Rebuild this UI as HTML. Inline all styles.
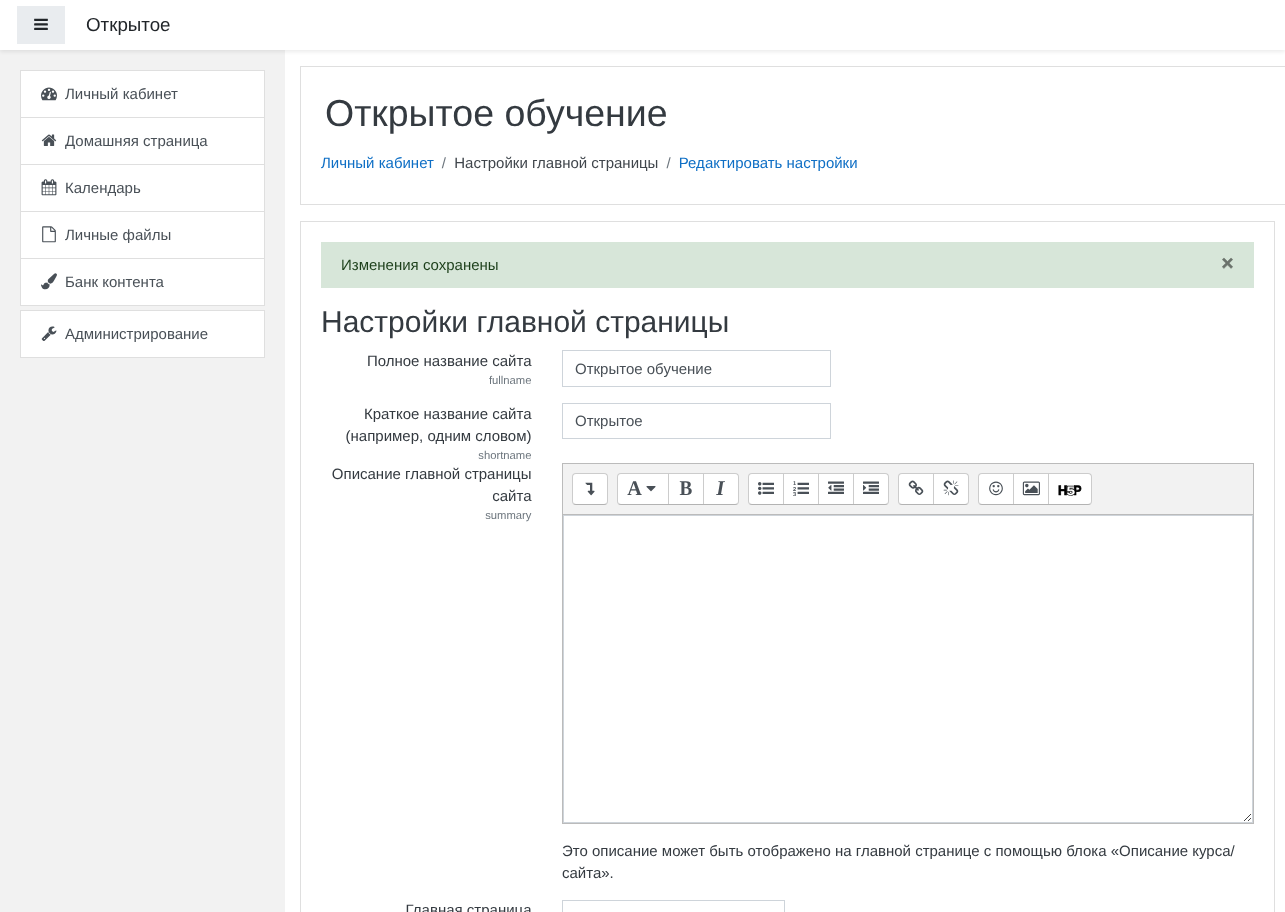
<!DOCTYPE html>
<html lang="ru">
<head>
<meta charset="utf-8">
<title>Открытое обучение: Настройки главной страницы</title>
<style>
*{box-sizing:border-box}
html,body{margin:0;padding:0}
body{width:1285px;height:912px;overflow:hidden;background:#fff;color:#343a40;
 font-family:"Liberation Sans",Arial,Helvetica,sans-serif;font-size:15px;line-height:1.5;position:relative;will-change:transform;text-rendering:geometricPrecision}
a{color:#0f6fc5;text-decoration:none}
.ic{position:absolute;display:block;overflow:visible}
.navbar{position:absolute;left:0;top:0;width:1285px;height:50px;background:#fff;box-shadow:0 2px 4px rgba(0,0,0,.08);z-index:10}
.navbtn{position:absolute;left:17px;top:6px;width:48px;height:38px;background:#e9ecef}
.brand{position:absolute;left:86px;top:11px;font-size:18.75px;line-height:28px;color:#212529}
.drawer{position:absolute;left:0;top:50px;width:285px;height:862px;background:#f2f2f2;padding:20px}
.lg{background:#fff;border:1px solid #dfdfdf;margin-bottom:4px;width:245px}
.lg a{display:block;height:47px;border-bottom:1px solid #dfdfdf;color:#495057;position:relative}
.lg a:last-child{border-bottom:0;height:46px}
.lg a span{position:absolute;left:44px;top:13px;white-space:nowrap;line-height:22px}
.card{position:absolute;background:#fff;border:1px solid #dfdfdf}
#c1{left:300px;top:66px;width:1000px;height:139px}
#c2{left:300px;top:221px;width:975px;height:720px}
h1{position:absolute;left:24px;top:24px;margin:0;font-size:37.5px;font-weight:300;line-height:45px;color:#343a40;white-space:nowrap}
.bc{position:absolute;left:20px;top:86px;white-space:nowrap;line-height:22px}
.bc .sep{color:#6c757d;padding:0 8.2px 0 8px}
.alert{position:absolute;left:20px;top:20px;width:933px;height:46px;background:#d7e6d9;color:#1c3f1a;padding:13px 20px 11px;line-height:22px}
.alert .x{position:absolute;right:20.5px;top:11px;font-size:20.5px;font-weight:700;color:#000;opacity:.5;line-height:22px;-webkit-text-stroke:.5px #000}
h2{position:absolute;left:20px;top:83px;margin:0;font-size:30px;font-weight:300;line-height:36px;color:#343a40;white-space:nowrap}
.lbl{position:absolute;right:742.5px;text-align:right;line-height:22px;white-space:nowrap}
.lbl small{display:block;font-size:11.25px;color:#6c757d;line-height:14px;margin-top:1px}
.inp{position:absolute;left:261px;width:269px;height:36px;border:1px solid #ced4da;padding:7px 12px 5px;line-height:22px;color:#495057;white-space:nowrap;background:#fff}
.editor{position:absolute;left:261px;top:241px;width:692px}
.tb{height:52px;background:#f2f2f2;border:1px solid #bbb;position:relative}
.grp{position:absolute;top:9px;height:32px;border:1px solid #ccc;border-bottom-color:#b3b3b3;background:#fff;border-radius:4px}
.grp b{position:absolute;top:0;width:1px;height:30px;background:#ccc}
.ta{height:309px;border:1px solid #bbb;border-top:0;background:#fff;position:relative}
.ta div{position:absolute;left:0;top:0;right:0;bottom:0;border:1px solid #ced4da}
.help{position:absolute;left:261px;top:619px;width:700px;line-height:22px}
.st{position:absolute;display:block;overflow:visible}
</style>
</head>
<body>
<div class="navbar">
 <div class="navbtn"><svg class="ic" style="left:17px;top:10px" width="14" height="16" viewBox="128 -45 1536 1792"><path fill="#212529" d="M1664 1344v128q0 26-19 45t-45 19h-1408q-26 0-45-19t-19-45v-128q0-26 19-45t45-19h1408q26 0 45 19t19 45zm0-512v128q0 26-19 45t-45 19h-1408q-26 0-45-19t-19-45v-128q0-26 19-45t45-19h1408q26 0 45 19t19 45zm0-512v128q0 26-19 45t-45 19h-1408q-26 0-45-19t-19-45v-128q0-26 19-45t45-19h1408q26 0 45 19t19 45z"/></svg></div>
 <div class="brand">Открытое</div>
</div>
<div class="drawer">
 <div class="lg"><a><svg class="ic" style="left:20px;top:14px" width="16" height="16" viewBox="0 -33.6 1792 1792"><path fill="#495057" d="M384 1152q0-53-37.500-90.500t-90.500-37.500-90.500 37.500-37.500 90.500 37.500 90.500 90.500 37.500 90.500-37.500 37.500-90.500zm192-448q0-53-37.500-90.500t-90.500-37.500-90.500 37.500-37.500 90.500 37.500 90.500 90.500 37.500 90.500-37.500 37.500-90.500zm428 481l101-382q6-26-7.500-48.500t-38.500-29.500-48 6.500-30 39.500l-101 382q-60 5-107 43.500t-63 98.500q-20 77 20 146t117 89 146-20 89-117q16-60-6-117t-72-91zm660-33q0-53-37.500-90.500t-90.500-37.500-90.500 37.500-37.500 90.500 37.500 90.500 90.500 37.500 90.500-37.500 37.500-90.500zm-640-640q0-53-37.500-90.500t-90.500-37.500-90.500 37.500-37.500 90.500 37.500 90.500 90.500 37.500 90.500-37.500 37.500-90.500zm448 192q0-53-37.500-90.500t-90.500-37.500-90.500 37.500-37.500 90.500 37.500 90.500 90.500 37.500 90.500-37.500 37.500-90.500zm320 448q0 261-141 483-19 29-54 29h-1402q-35 0-54-29-141-221-141-483 0-182 71-348t191-286 286-191 348-71 348 71 286 191 191 286 71 348z"/></svg><span>Личный кабинет</span></a><a><svg class="ic" style="left:20px;top:14px" width="16" height="16" viewBox="0 -33.6 1792 1792"><path fill="#495057" d="M1472 992v480q0 26-19 45t-45 19h-384v-384h-256v384h-384q-26 0-45-19t-19-45v-480q0-1 .5-3t.5-3l575-474 575 474q1 2 1 6zm223-69l-62 74q-8 9-21 11h-3q-13 0-21-7l-692-577-692 577q-12 8-24 7-13-2-21-11l-62-74q-8-10-7-23.500t11-21.500l719-599q32-26 76-26t76 26l244 204v-195q0-14 9-23t23-9h192q14 0 23 9t9 23v408l219 182q10 8 11 21.500t-7 23.500z"/></svg><span>Домашняя страница</span></a><a><svg class="ic" style="left:20px;top:14px" width="16" height="16" viewBox="0 -33.6 1792 1792"><path fill="#495057" d="M192 1664h288v-288h-288v288zm352 0h320v-288h-320v288zm-352-352h288v-320h-288v320zm352 0h320v-320h-320v320zm-352-384h288v-288h-288v288zm736 736h320v-288h-320v288zm-384-736h320v-288h-320v288zm768 736h288v-288h-288v288zm-384-352h320v-320h-320v320zm-352-864v-288q0-13-9.500-22.500t-22.500-9.500h-64q-13 0-22.500 9.500t-9.500 22.500v288q0 13 9.500 22.500t22.500 9.500h64q13 0 22.500-9.500t9.500-22.500zm736 864h288v-320h-288v320zm-384-384h320v-288h-320v288zm384 0h288v-288h-288v288zm32-480v-288q0-13-9.500-22.500t-22.500-9.500h-64q-13 0-22.500 9.500t-9.500 22.500v288q0 13 9.500 22.500t22.500 9.500h64q13 0 22.500-9.500t9.500-22.500zm384-64v1280q0 52-38 90t-90 38h-1408q-52 0-90-38t-38-90v-1280q0-52 38-90t90-38h128v-96q0-66 47-113t113-47h64q66 0 113 47t47 113v96h384v-96q0-66 47-113t113-47h64q66 0 113 47t47 113v96h128q52 0 90 38t38 90z"/></svg><span>Календарь</span></a><a><svg class="ic" style="left:20px;top:14px" width="16" height="16" viewBox="0 -33.6 1792 1792"><path fill="#495057" d="M1596 380q28 28 48 76t20 88v1152q0 40-28 68t-68 28h-1344q-40 0-68-28t-28-68v-1600q0-40 28-68t68-28h896q40 0 88 20t76 48zm-444-244v376h376q-10-29-22-41l-313-313q-12-12-41-22zm384 1528v-1024h-416q-40 0-68-28t-28-68v-416h-768v1536h1280z"/></svg><span>Личные файлы</span></a><a><svg class="ic" style="left:20px;top:14px" width="16" height="16" viewBox="0 -33.6 1792 1792"><path fill="#495057" d="M1615 0q70 0 122.500 46.500t52.500 116.500q0 63-45 151-332 629-465 752-97 91-218 91-126 0-216.500-92.500t-90.500-219.500q0-128 92-212l638-579q59-54 130-54zm-909 1034q39 76 106.500 130t150.500 76l1 71q4 213-129.500 347t-348.500 134q-123 0-218-46.500t-152.500-127.500-86.500-183-29-220q7 5 41 30t62 44.500 59 36.500 46 17q41 0 55-37 25-66 57.500-112.500t69.500-76 88-47.500 103-25.500 125-10.500z"/></svg><span>Банк контента</span></a></div>
 <div class="lg"><a><svg class="ic" style="left:20px;top:14px" width="16" height="16" viewBox="0 -33.6 1792 1792"><path fill="#495057" d="M448 1472q0-26-19-45t-45-19-45 19-19 45 19 45 45 19 45-19 19-45zm644-420l-682 682q-37 37-90 37-52 0-91-37l-106-108q-38-36-38-90 0-53 38-91l681-681q39 98 114.500 173.500t173.500 114.500zm634-435q0 39-23 106-47 134-164.500 217.500t-258.500 83.500q-185 0-316.500-131.500t-131.500-316.500 131.500-316.500 316.500-131.500q58 0 121.500 16.500t107.500 46.500q16 11 16 28t-16 28l-293 169v224l193 107q5-3 79-48.500t135.500-81 70.500-35.500q15 0 23.500 10t8.500 25z"/></svg><span>Администрирование</span></a></div>
</div>
<div class="card" id="c1">
 <h1>Открытое обучение</h1>
 <div class="bc"><a>Личный кабинет</a><span class="sep">/</span><span style="color:#40464c">Настройки главной страницы</span><span class="sep">/</span><a>Редактировать настройки</a></div>
</div>
<div class="card" id="c2">
 <div class="alert">Изменения сохранены<span class="x">×</span></div>
 <h2>Настройки главной страницы</h2>
 <div class="lbl" style="top:129px">Полное название сайта<small>fullname</small></div>
 <div class="inp" style="top:128px;height:37px;padding-top:8px">Открытое обучение</div>
 <div class="lbl" style="top:182px">Краткое название сайта<br>(например, одним словом)<small>shortname</small></div>
 <div class="inp" style="top:181px">Открытое</div>
 <div class="lbl" style="top:242px">Описание главной страницы<br>сайта<small>summary</small></div>
 <div class="editor">
  <div class="tb"><div class="grp" style="left:9px;width:36px"><svg class="ic" style="left:9px;top:6px" width="16" height="16" viewBox="0 -44.8 1792 1792"><path fill="#495057" d="M416 256h704q13 0 22.500 9.500t9.500 23.500v863h192q40 0 58 37t-9 69l-320 384q-18 22-49 22t-49-22l-320-384q-26-31-9-69 18-37 58-37h192v-640h-320q-14 0-25-11l-160-192q-13-14-4-34 9-19 29-19z"/></svg></div><div class="grp" style="left:54px;width:122px"><svg class="st" style="left:9px;top:6px" width="16" height="16"><text x="0.2" y="14.9" font-family="Liberation Serif, Times New Roman, serif" fill="#495057" font-weight="700" font-size="21" textLength="14.6" lengthAdjust="spacingAndGlyphs">A</text></svg><svg class="ic" style="left:25px;top:6px" width="16" height="16" viewBox="0 -44.8 1792 1792"><path fill="#495057" d="M1408 704q0 26-19 45l-448 448q-19 19-45 19t-45-19l-448-448q-19-19-19-45t19-45 45-19h896q26 0 45 19t19 45z"/></svg><b style="left:50px"></b><svg class="st" style="left:60px;top:6px" width="16" height="16"><text x="1.5" y="14.9" font-family="Liberation Serif, Times New Roman, serif" fill="#495057" font-weight="700" font-size="21" textLength="12.8" lengthAdjust="spacingAndGlyphs">B</text></svg><b style="left:85px"></b><svg class="st" style="left:95px;top:6px" width="16" height="16"><text x="3.2" y="14.9" font-family="Liberation Serif, Times New Roman, serif" fill="#495057" font-weight="700" font-style="italic" font-size="21">I</text></svg></div><div class="grp" style="left:185px;width:141px"><svg class="ic" style="left:9px;top:6px" width="16" height="16" viewBox="0 -44.8 1792 1792"><path fill="#495057" d="M384 1408q0 80-56 136t-136 56-136-56-56-136 56-136 136-56 136 56 56 136zm0-512q0 80-56 136t-136 56-136-56-56-136 56-136 136-56 136 56 56 136zm1408 416v192q0 13-9.500 22.500t-22.500 9.500h-1216q-13 0-22.500-9.500t-9.500-22.500v-192q0-13 9.500-22.500t22.500-9.500h1216q13 0 22.500 9.500t9.500 22.500zm-1408-928q0 80-56 136t-136 56-136-56-56-136 56-136 136-56 136 56 56 136zm1408 416v192q0 13-9.500 22.500t-22.500 9.500h-1216q-13 0-22.500-9.500t-9.500-22.500v-192q0-13 9.500-22.500t22.500-9.500h1216q13 0 22.500 9.500t9.500 22.500zm0-512v192q0 13-9.500 22.500t-22.500 9.500h-1216q-13 0-22.500-9.500t-9.500-22.500v-192q0-13 9.500-22.500t22.500-9.500h1216q13 0 22.500 9.500t9.500 22.500z"/></svg><b style="left:34px"></b><svg class="ic" style="left:44px;top:6px" width="16" height="16" viewBox="0 -44.8 1792 1792"><path fill="#495057" d="M1792 1312v192q0 13-9.500 22.500t-22.500 9.500h-1216q-13 0-22.500-9.500t-9.500-22.500v-192q0-14 9-23t23-9h1216q13 0 22.500 9.500t9.500 22.500zm0-512v192q0 13-9.500 22.500t-22.500 9.500h-1216q-13 0-22.500-9.500t-9.500-22.500v-192q0-14 9-23t23-9h1216q13 0 22.500 9.500t9.500 22.500zm0-512v192q0 13-9.500 22.500t-22.500 9.500h-1216q-13 0-22.500-9.500t-9.500-22.500v-192q0-13 9.500-22.500t22.500-9.500h1216q13 0 22.500 9.500t9.500 22.500z"/><text x="190" y="505" font-family="Liberation Sans, sans-serif" font-weight="700" font-size="640" text-anchor="middle" fill="#495057">1</text><text x="190" y="1145" font-family="Liberation Sans, sans-serif" font-weight="700" font-size="640" text-anchor="middle" fill="#495057">2</text><text x="190" y="1785" font-family="Liberation Sans, sans-serif" font-weight="700" font-size="640" text-anchor="middle" fill="#495057">3</text></svg><b style="left:69px"></b><svg class="ic" style="left:79px;top:6px" width="16" height="16" viewBox="0 -44.8 1792 1792"><path fill="#495057" d="M384 544v576q0 13-9.500 22.500t-22.500 9.500q-14 0-23-9l-288-288q-9-9-9-23t9-23l288-288q9-9 23-9 13 0 22.500 9.500t9.500 22.500zm1408 768v192q0 13-9.500 22.500t-22.500 9.500h-1728q-13 0-22.500-9.500t-9.500-22.500v-192q0-13 9.500-22.500t22.500-9.500h1728q13 0 22.500 9.500t9.500 22.500zm0-384v192q0 13-9.500 22.500t-22.500 9.500h-1088q-13 0-22.500-9.500t-9.500-22.500v-192q0-13 9.500-22.500t22.500-9.500h1088q13 0 22.500 9.500t9.500 22.500zm0-384v192q0 13-9.500 22.500t-22.500 9.500h-1088q-13 0-22.500-9.500t-9.500-22.500v-192q0-13 9.500-22.500t22.500-9.500h1088q13 0 22.500 9.500t9.500 22.500zm0-384v192q0 13-9.500 22.500t-22.500 9.500h-1728q-13 0-22.500-9.500t-9.500-22.500v-192q0-13 9.500-22.500t22.500-9.500h1728q13 0 22.500 9.500t9.500 22.500z"/></svg><b style="left:104px"></b><svg class="ic" style="left:114px;top:6px" width="16" height="16" viewBox="0 -44.8 1792 1792"><path fill="#495057" d="M352 832q0 14-9 23l-288 288q-9 9-23 9-13 0-22.500-9.500t-9.500-22.500v-576q0-13 9.500-22.500t22.500-9.500q14 0 23 9l288 288q9 9 9 23zm1440 480v192q0 13-9.500 22.500t-22.500 9.500h-1728q-13 0-22.500-9.500t-9.500-22.500v-192q0-13 9.500-22.500t22.500-9.500h1728q13 0 22.500 9.500t9.500 22.500zm0-384v192q0 13-9.500 22.500t-22.500 9.500h-1088q-13 0-22.500-9.500t-9.500-22.500v-192q0-13 9.500-22.500t22.500-9.500h1088q13 0 22.500 9.500t9.500 22.500zm0-384v192q0 13-9.500 22.500t-22.500 9.500h-1088q-13 0-22.500-9.500t-9.500-22.500v-192q0-13 9.500-22.500t22.500-9.500h1088q13 0 22.500 9.500t9.500 22.500zm0-384v192q0 13-9.500 22.500t-22.500 9.500h-1728q-13 0-22.500-9.500t-9.500-22.500v-192q0-13 9.500-22.500t22.500-9.500h1728q13 0 22.500 9.500t9.500 22.500z"/></svg></div><div class="grp" style="left:335px;width:71px"><svg class="ic" style="left:9px;top:6px" width="16" height="16" viewBox="0 -44.8 1792 1792"><path fill="#495057" d="M1520 1216q0-40-28-68l-208-208q-28-28-68-28-42 0-72 32 3 3 19 18.500t21.500 21.500 15 19 13 25.500 3.500 27.500q0 40-28 68t-68 28q-15 0-27.500-3.500t-25.500-13-19-15-21.500-21.500-18.500-19q-33 31-33 73 0 40 28 68l206 207q27 27 68 27 40 0 68-26l147-146q28-28 28-67zm-703-705q0-40-28-68l-206-207q-28-28-68-28-39 0-68 27l-147 146q-28 28-28 67 0 40 28 68l208 208q27 27 68 27 42 0 72-31-3-3-19-18.500t-21.500-21.500-15-19-13-25.500-3.500-27.500q0-40 28-68t68-28q15 0 27.500 3.500t25.500 13 19 15 21.500 21.500 18.500 19q33-31 33-73zm895 705q0 120-85 203l-147 146q-83 83-203 83-121 0-204-85l-206-207q-83-83-83-203 0-123 88-209l-88-88q-86 88-208 88-120 0-204-84l-208-208q-84-84-84-204t85-203l147-146q83-83 203-83 121 0 204 85l206 207q83 83 83 203 0 123-88 209l88 88q86-88 208-88 120 0 204 84l208 208q84 84 84 204z"/></svg><b style="left:34px"></b><svg class="ic" style="left:44px;top:6px" width="16" height="16" viewBox="0 -44.8 1792 1792"><path fill="#495057" d="M503 1271l-256 256q-10 9-23 9-12 0-23-9-9-10-9-23t9-23l256-256q10-9 23-9t23 9q9 10 9 23t-9 23zm169 41v320q0 14-9 23t-23 9-23-9-9-23v-320q0-14 9-23t23-9 23 9 9 23zm-224-224q0 14-9 23t-23 9h-320q-14 0-23-9t-9-23 9-23 23-9h320q14 0 23 9t9 23zm1264 128q0 120-85 203l-147 146q-83 83-203 83-121 0-204-85l-334-335q-21-21-42-56l239-18 273 274q27 27 68 27.500t68-26.500l147-146q28-28 28-67 0-40-28-68l-274-275 18-239q35 21 56 42l336 336q84 86 84 204zm-617-724l-239 18-273-274q-28-28-68-28-39 0-68 27l-147 146q-28 28-28 67 0 40 28 68l274 274-18 240q-35-21-56-42l-336-336q-84-86-84-204 0-120 85-203l147-146q83-83 203-83 121 0 204 85l334 335q21 21 42 56zm633 84q0 14-9 23t-23 9h-320q-14 0-23-9t-9-23 9-23 23-9h320q14 0 23 9t9 23zm-544-544v320q0 14-9 23t-23 9-23-9-9-23v-320q0-14 9-23t23-9 23 9 9 23zm407 151l-256 256q-11 9-23 9t-23-9q-9-10-9-23t9-23l256-256q10-9 23-9t23 9q9 10 9 23t-9 23z"/></svg></div><div class="grp" style="left:415px;width:114px"><svg class="ic" style="left:9px;top:6px" width="16" height="16" viewBox="0 -44.8 1792 1792"><path fill="#495057" d="M1262 1075q-37 121-138 195t-228 74-228-74-138-195q-8-25 4-48.500t38-31.500q25-8 48.500 4t31.500 38q25 80 92.500 129.500t151.500 49.500 151.500-49.500 92.500-129.500q8-26 32-38t49-4 37 31.500 4 48.500zm-494-435q0 53-37.500 90.500t-90.500 37.500-90.500-37.500-37.500-90.500 37.500-90.500 90.500-37.500 90.500 37.500 37.500 90.500zm512 0q0 53-37.500 90.500t-90.500 37.500-90.500-37.500-37.500-90.500 37.500-90.500 90.500-37.500 90.500 37.500 37.500 90.500zm256 256q0-130-51-248.500t-136.500-204-204-136.500-248.500-51-248.500 51-204 136.500-136.500 204-51 248.500 51 248.500 136.500 204 204 136.500 248.500 51 248.500-51 204-136.500 136.500-204 51-248.500zm128 0q0 209-103 385.500t-279.500 279.500-385.500 103-385.500-103-279.500-279.500-103-385.500 103-385.500 279.500-279.500 385.500-103 385.500 103 279.500 279.500 103 385.500z"/></svg><b style="left:34px"></b><svg class="ic" style="left:44px;top:6px" width="16" height="16" viewBox="-44.8 -44.8 1792 1792"><path fill="#495057" d="M576 576q0 80-56 136t-136 56-136-56-56-136 56-136 136-56 136 56 56 136zm1024 384v448h-1408v-192l320-320 160 160 512-512zm96-704h-1600q-13 0-22.500 9.500t-9.500 22.500v1216q0 13 9.500 22.500t22.500 9.500h1600q13 0 22.500-9.500t9.500-22.500v-1216q0-13-9.500-22.500t-22.500-9.500zm160 32v1216q0 66-47 113t-113 47h-1600q-66 0-113-47t-47-113v-1216q0-66 47-113t113-47h1600q66 0 113 47t47 113z"/></svg><b style="left:69px"></b><svg class="st" style="left:79px;top:6px" width="24" height="16"><text x="0" y="15" font-family="Liberation Sans, Arial, sans-serif" font-weight="700" font-size="13.8" fill="#000" stroke="#000" stroke-width=".7" textLength="9.4" lengthAdjust="spacingAndGlyphs">H</text><text x="15.6" y="15" font-family="Liberation Sans, Arial, sans-serif" font-weight="700" font-size="13.8" fill="#000" stroke="#000" stroke-width=".7" textLength="8" lengthAdjust="spacingAndGlyphs">P</text><text x="8.4" y="15.4" font-family="Liberation Sans, Arial, sans-serif" font-weight="700" font-size="12.5" fill="#fff" stroke="#000" stroke-width="1.4" paint-order="stroke" textLength="8.6" lengthAdjust="spacingAndGlyphs">5</text></svg></div></div>
  <div class="ta"><div></div><svg class="ic" style="right:0px;bottom:1px" width="9" height="9" viewBox="0 0 9 9" shape-rendering="crispEdges"><rect x="0" y="7" width="1" height="1" fill="#444"/><rect x="1" y="6" width="1" height="1" fill="#444"/><rect x="2" y="5" width="1" height="1" fill="#444"/><rect x="3" y="4" width="1" height="1" fill="#444"/><rect x="4" y="3" width="1" height="1" fill="#444"/><rect x="5" y="2" width="1" height="1" fill="#444"/><rect x="6" y="1" width="1" height="1" fill="#444"/><rect x="4" y="7" width="1" height="1" fill="#444"/><rect x="5" y="6" width="1" height="1" fill="#444"/><rect x="6" y="5" width="1" height="1" fill="#444"/></svg></div>
 </div>
 <div class="help">Это описание может быть отображено на главной странице с помощью блока «Описание курса/<br>сайта».</div>
 <div class="lbl" style="top:678px">Главная страница</div>
 <div class="inp" style="top:678px;width:223px"></div>
</div>
</body>
</html>
